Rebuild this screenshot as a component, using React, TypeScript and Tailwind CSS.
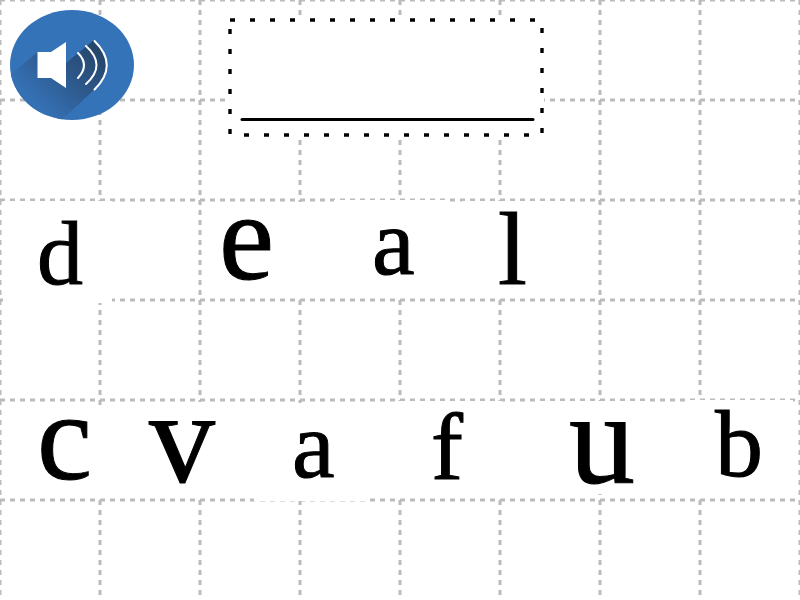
import React from "react";

type Tile = { id: string; letter: string; className: string };

const tiles: Tile[] = [
  { id: "d", letter: "d", className: "left-[3px] top-[201px] w-[109px] h-[102px] pl-[34px] text-[92px] leading-[104px]" },
  { id: "e", letter: "e", className: "left-[202px] top-[202px] w-[101px] h-[96px] pl-[17px] text-[124px] leading-[72px]" },
  { id: "a1", letter: "a", className: "left-[334px] top-[200px] w-[111px] h-[98px] pl-[38px] text-[96px] leading-[84px]" },
  { id: "l", letter: "l", className: "left-[462px] top-[201px] w-[108px] h-[97px] pl-[36px] text-[104px] leading-[96px]" },
  { id: "c", letter: "c", className: "left-[5px] top-[405px] w-[105px] h-[93px] pl-[32px] text-[124px] leading-[66px]" },
  { id: "v", letter: "v", className: "left-[140px] top-[402px] w-[100px] h-[96px] pl-[9px] text-[132px] leading-[72px]" },
  { id: "a2", letter: "a", className: "left-[254px] top-[403px] w-[115px] h-[98px] pl-[38px] text-[96px] leading-[84px]" },
  { id: "f", letter: "f", className: "left-[395px] top-[401px] w-[107px] h-[97px] pl-[36px] text-[96px] leading-[92px]" },
  { id: "u", letter: "u", className: "left-[535px] top-[401px] w-[110px] h-[93px] pl-[34px] text-[132px] leading-[76px]" },
  { id: "b", letter: "b", className: "left-[690px] top-[400px] w-[103px] h-[98px] pl-[25px] text-[96px] leading-[88px]" },
];

const columns = Array.from({ length: 25 }, (_, i) => i * 100);
const rows = Array.from({ length: 6 }, (_, i) => i * 100);

function Grid() {
  return (
    <svg
      className="absolute inset-0 h-full w-full"
      stroke="#bbbbbb"
      strokeWidth="3"
      strokeDasharray="5 5"
      aria-hidden="true"
    >
      {columns.map((x) => (
        <line key={x} x1={x} y1="0" x2={x} y2="100%" />
      ))}
      {rows.map((y) => (
        <line key={y} x1="0" y1={y} x2="100%" y2={y} />
      ))}
    </svg>
  );
}

function SpeakerIcon() {
  return (
    <svg width="124" height="110" viewBox="10 10 124 110" aria-hidden="true">
      <defs>
        <clipPath id="disc">
          <ellipse cx="72" cy="65" rx="62" ry="55" />
        </clipPath>
        <linearGradient id="shade" gradientUnits="userSpaceOnUse" x1="98" y1="46" x2="40" y2="104">
          <stop offset="0" stopColor="#254568" />
          <stop offset="0.5" stopColor="#2d588b" />
          <stop offset="1" stopColor="#3570b3" />
        </linearGradient>
      </defs>
      <ellipse cx="72" cy="65" rx="62" ry="55" fill="#3573b9" />
      <g clipPath="url(#disc)">
        <path d="M38 52L0 83V150H29L94 90Q119 65 94 40L66 63L52 78Z" fill="url(#shade)" />
      </g>
      <path d="M37.5 52H51L66 42V88L51 78H37.5Z" fill="#fff" />
      <g fill="none" stroke="#fff" strokeWidth="2" strokeLinecap="round">
        <path d="M78 53Q90 65 78 78" />
        <path d="M86 46Q107 65 86 84" />
        <path d="M94.500 41Q119 65 94.500 89.500" />
      </g>
    </svg>
  );
}

function AnswerBox() {
  return (
    <svg width="316" height="119" viewBox="228 18 316 119" role="img" aria-label="Answer box">
      <rect x="228" y="18" width="316" height="119" fill="#fff" />
      <rect x="230" y="20" width="312" height="115" fill="none" stroke="#000" strokeWidth="3.4" strokeDasharray="5 15" />
      <path d="M242 119.5H533" stroke="#000" strokeWidth="3" strokeLinecap="round" />
    </svg>
  );
}

export default function App() {
  return (
    <main className="relative min-h-screen overflow-hidden bg-white font-['Liberation_Serif','Times_New_Roman',serif] text-black">
      <Grid />
      <header className="relative flex items-start gap-[94px] px-[10px] pt-[10px]">
        <button type="button" aria-label="Play word" className="shrink-0 rounded-full">
          <SpeakerIcon />
        </button>
        <div className="shrink-0 pt-2">
          <AnswerBox />
        </div>
      </header>
      {tiles.map((tile) => (
        <button
          key={tile.id}
          type="button"
          className={`absolute flex items-start bg-white [-webkit-text-stroke:1px_black] ${tile.className}`}
        >
          {tile.letter}
        </button>
      ))}
    </main>
  );
}
